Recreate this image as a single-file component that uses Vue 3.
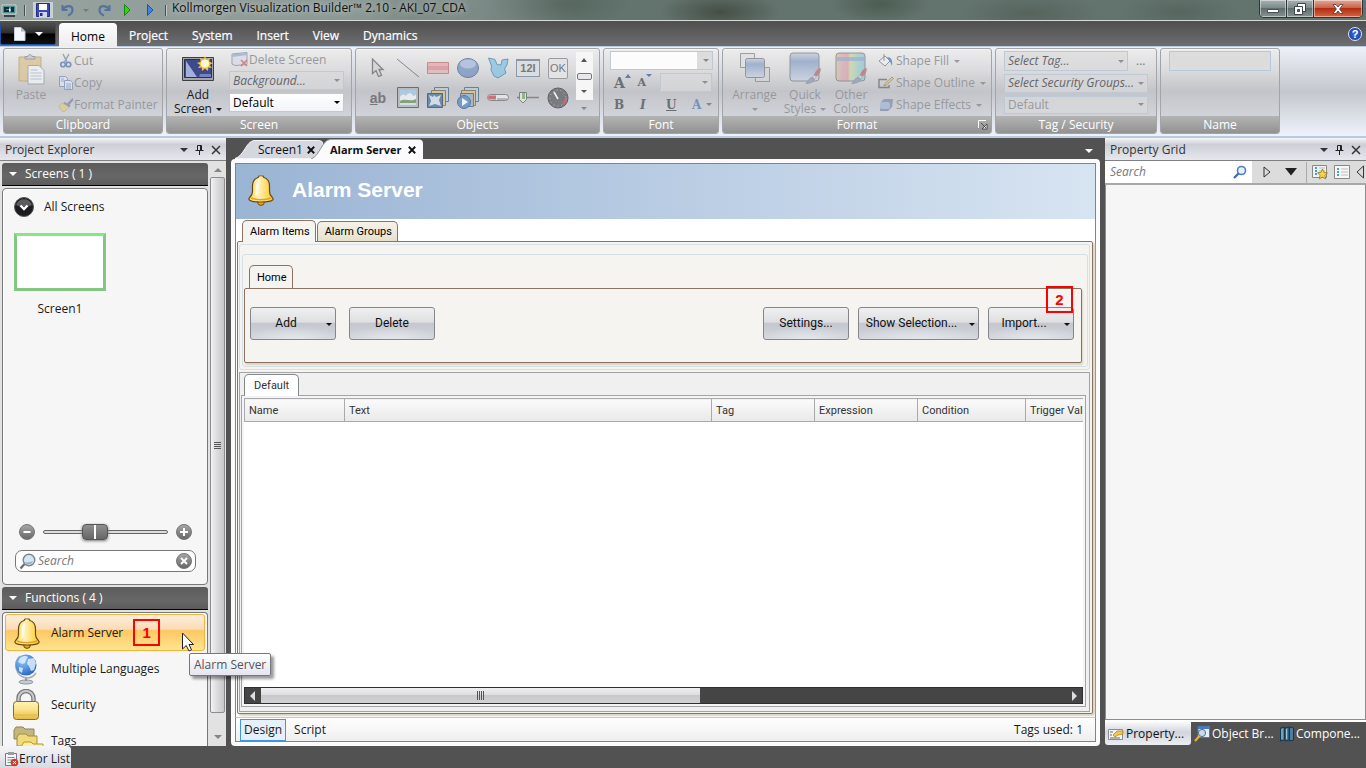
<script setup>
import { ref } from 'vue'

const ribbonTabs = ['Project', 'System', 'Insert', 'View', 'Dynamics']
const columns = [
  { name: 'Name', cls: 'c-name' },
  { name: 'Text', cls: 'c-text' },
  { name: 'Tag', cls: 'c-tag' },
  { name: 'Expression', cls: 'c-expr' },
  { name: 'Condition', cls: 'c-cond' },
  { name: 'Trigger Val', cls: 'c-trig' }
]
const zoom = ref(39)
</script>

<template>
  <div class="app">
    <svg class="defs" width="0" height="0" aria-hidden="true">
      <defs>
        <linearGradient id="gold" x1="0" y1="0" x2="1" y2="0">
          <stop offset="0" stop-color="#ffd54f" /><stop offset="0.4" stop-color="#fff2b8" /><stop offset="1" stop-color="#ffc928" />
        </linearGradient>
        <linearGradient id="lockg" x1="0" y1="0" x2="0" y2="1">
          <stop offset="0" stop-color="#fff3b4" /><stop offset="0.45" stop-color="#fbe28a" /><stop offset="1" stop-color="#e3b93f" />
        </linearGradient>
        <radialGradient id="globe" cx="0.35" cy="0.3" r="0.8">
          <stop offset="0" stop-color="#8cc8ff" /><stop offset="1" stop-color="#1d5fc0" />
        </radialGradient>
        <linearGradient id="shapeblue" x1="0" y1="0" x2="0" y2="1">
          <stop offset="0" stop-color="#c9d0da" /><stop offset="0.3" stop-color="#94a9c9" /><stop offset="1" stop-color="#ccd4e2" />
        </linearGradient>
        <linearGradient id="rainbow" x1="0" y1="0" x2="1" y2="0">
          <stop offset="0" stop-color="#d9c7ab" /><stop offset="0.2" stop-color="#d5b3b8" /><stop offset="0.4" stop-color="#d8a9b3" />
          <stop offset="0.5" stop-color="#cdd7a8" /><stop offset="0.75" stop-color="#a8d0c9" /><stop offset="1" stop-color="#9cc4de" />
        </linearGradient>
        <linearGradient id="ball" x1="0" y1="0" x2="0" y2="1">
          <stop offset="0" stop-color="#a8a8a8" /><stop offset="1" stop-color="#666" />
        </linearGradient>
        <symbol id="bell" viewBox="0 0 28 32">
          <circle cx="14" cy="28" r="3.4" fill="#e9a41c" stroke="#6b4a12" />
          <path d="M14 1.500c-1.600 0-2.600.800-2.900 2C7.400 4.600 5.500 7.800 5.500 12v5.500c0 2.600-1 4.200-2.600 5.700-.9.900-1.300 1.700-.8 2.400 1 1.500 6 2.400 11.900 2.400s10.900-.9 11.900-2.400c.5-.7.1-1.500-.8-2.400-1.600-1.500-2.600-3.100-2.600-5.700V12c0-4.200-1.900-7.400-5.600-8.500-.3-1.200-1.300-2-2.900-2z" fill="url(#gold)" stroke="#6b4a12" stroke-width="1.200" />
          <path d="M4 24c5 2.200 15 2.200 20 0" fill="none" stroke="#e2a41e" stroke-width="1.500" />
          <path d="M9 9c1-2 2-2.800 3.500-3.200L11 20l-3 2z" fill="#fff" opacity=".7" />
        </symbol>
        <symbol id="pin" viewBox="0 0 9 10">
          <path d="M2.500 .5h4v5h-4zM5.500 .5v5M.5 5.500h8M4.500 6v4" fill="none" stroke="#222" />
        </symbol>
        <symbol id="cross" viewBox="0 0 10 10">
          <path d="M1 1l8 8M9 1l-8 8" stroke="#333" stroke-width="1.500" fill="none" />
        </symbol>
        <symbol id="brush" viewBox="0 0 16 16">
          <path d="M15.500 0c.8 3-1 7-4.500 8.500L9 7c1-3.500 3.500-6.500 6.500-7z" fill="#b97a80" />
          <path d="M9 7l2.200 1.800-1.700 2-2-1.500z" fill="#d9dde4" stroke="#8a8e98" stroke-width=".5" />
          <path d="M7.500 9.300l2 1.700c-.5 3-3.500 4.500-9 4.500 2.500-1 2.500-5.500 7-6.200z" fill="#98a2b8" stroke="#7d879c" stroke-width=".5" />
        </symbol>
      </defs>
    </svg>

    <header class="titlebar">
      <div class="quick">
        <svg width="16" height="16" viewBox="0 0 16 16"><path d="M1 3h14v9H1z" fill="#4f9096" stroke="#cdd6d6" /><path d="M3 5h5v2H5v1h3v2H3zM10 5h3v5h-3z" fill="#0e3035" /><path d="M8 6l2 2-2 2z" fill="#fff" /><path d="M3 14h11" stroke="#3a4444" stroke-width="2" /></svg>
        <i class="sep"></i>
        <button aria-label="Save" class="q save"><svg width="14" height="14" viewBox="0 0 14 14"><path d="M.5 .5h13v13h-13z" fill="#3c49b5" stroke="#232c86" /><path d="M3 1h8v6H3z" fill="#fff" /><path d="M3 9h8v5H3z" fill="#cfd5ee" /><path d="M4 10h2.500v3H4z" fill="#232c86" /></svg></button>
        <button aria-label="Undo" class="q"><svg width="14" height="14" viewBox="0 0 14 14"><path d="M1.500 2v5h5" fill="none" stroke="#56729e" stroke-width="2" /><path d="M2 6.500C4.500 2 11.500 1.800 11.500 7c0 3-2 4.500-4.500 5.500" fill="none" stroke="#56729e" stroke-width="2.200" /></svg></button>
        <i class="caret dim"></i>
        <button aria-label="Redo" class="q"><svg width="14" height="14" viewBox="0 0 14 14"><path d="M12.500 2v5h-5" fill="none" stroke="#56729e" stroke-width="2" /><path d="M12 6.500C9.500 2 2.500 1.800 2.500 7c0 3 2 4.500 4.500 5.500" fill="none" stroke="#56729e" stroke-width="2.200" /></svg></button>
        <button aria-label="Run" class="q"><svg width="12" height="14" viewBox="0 0 12 14"><path d="M3.500 1.500l5.500 5.500-5.500 5.500z" fill="#35cf1c" stroke="#128a0b" /></svg></button>
        <button aria-label="Simulate" class="q"><svg width="12" height="14" viewBox="0 0 12 14"><path d="M3.500 1.500l5.500 5.500-5.500 5.500z" fill="#3f83dd" stroke="#1b53a5" /></svg></button>
        <i class="sep"></i>
      </div>
      <h1>Kollmorgen Visualization Builder™ 2.10 - AKI_07_CDA</h1>
      <div class="winbtns">
        <button aria-label="Minimize"><svg width="14" height="12" viewBox="0 0 14 12"><path d="M1.500 6.500h11v3h-11z" fill="#fff" stroke="#4a5157" /></svg></button>
        <button aria-label="Restore"><svg width="14" height="14" viewBox="0 0 14 14"><path d="M4.500 1.500h8v8h-8z" fill="#fff" stroke="#3d454b" /><path d="M1.500 4.500h8v8h-8z" fill="#fff" stroke="#3d454b" /><path d="M4.500 7.500h2v2h-2z" fill="#6c777a" stroke="#3d454b" /></svg></button>
        <button aria-label="Close" class="close"><svg width="12" height="12" viewBox="0 0 12 12"><path d="M1 1.500h3L6 4l2-2.500h3L7.600 6l3.400 4.500H8L6 8l-2 2.500H1L4.400 6z" fill="#fff" stroke="#53393a" stroke-width=".8" /></svg></button>
      </div>
    </header>

    <nav class="tabs">
      <button class="filebtn" aria-label="File menu">
        <svg width="12" height="14" viewBox="0 0 12 14"><path d="M.5 .5h6.500l4 4v9H.5z" fill="#f4f7fb" stroke="#c4ccd6" /><path d="M7 .5v4h4z" fill="#aeb9c8" /></svg>
        <i class="caret big white"></i>
      </button>
      <button class="rtab active">Home</button>
      <button v-for="t in ribbonTabs" :key="t" class="rtab">{{ t }}</button>
      <button class="help" aria-label="Help">?</button>
    </nav>

    <section class="ribbon">
      <div class="group g-clip">
        <div class="gbody">
          <button class="bigbtn off paste">
            <svg width="30" height="32" viewBox="0 0 30 32"><path d="M3 4h22v24H3z" fill="#dcc79c" stroke="#bfa878" /><path d="M9 6V3.500h3C12 1 16 1 16 3.500h3V6z" fill="#c9ccd0" stroke="#8d9196" /><path d="M12 12.500h11l5 5V31H12z" fill="#eef1f5" stroke="#9ba3ae" /><path d="M14.500 17h7M14.500 20h11M14.500 23h11M14.500 26h11" stroke="#b5bdc9" /></svg>
            <span>Paste</span>
          </button>
          <div class="stack">
            <button class="row off"><svg width="16" height="16" viewBox="0 0 16 16"><path d="M5 1l4 8M11 1L6.500 9" stroke="#8c97a8" stroke-width="1.500" /><circle cx="5" cy="11.500" r="2.300" fill="none" stroke="#6985b8" stroke-width="1.600" /><circle cx="10.500" cy="11.500" r="2.300" fill="none" stroke="#6985b8" stroke-width="1.600" /></svg>Cut</button>
            <button class="row off"><svg width="16" height="16" viewBox="0 0 16 16"><path d="M1.500 1.500h6l2 2v8h-8z" fill="#dde3ee" stroke="#8799bb" /><path d="M6.500 5.500h6l2 2v7h-8z" fill="#dde3ee" stroke="#8799bb" /><path d="M3 4h3M3 6h3M8 9h5M8 11h5M8 13h5" stroke="#8fa3c8" /></svg>Copy</button>
            <button class="row off"><svg width="16" height="16" viewBox="0 0 16 16"><path d="M14.500 1L9 6.500l2 2L15.500 3z" fill="#8a91b8" /><path d="M4 6l7 4-5 5c-2-1-4-3-5-6z" fill="#dccf94" stroke="#b3a76f" stroke-width=".6" /><path d="M6 5.500l6 4" stroke="#8f95a2" stroke-width="2" /></svg>Format Painter</button>
          </div>
        </div>
        <div class="cap">Clipboard</div>
      </div>

      <div class="group g-screen">
        <div class="gbody">
          <button class="bigbtn addscreen">
            <svg width="32" height="26" viewBox="0 0 32 26"><path d="M.5 1.500h31v23H.5z" fill="#a2a5aa" stroke="#3c3e42" /><path d="M2.500 3.500h27v18h-27z" fill="#40498c" stroke="#2a2f55" /><path d="M4 5l11 16H4z" fill="#a3b0dc" /><path d="M18 18h11v3H17z" fill="#7182c6" /><path d="M23 0l1.500 3.500L28 2l-.8 3.700L31 7l-3.400 2L30 12l-3.700-.5L26 15l-3-2.500L20 15l-.3-3.500L16 12l2.300-3L15 7l3.700-1.300L18 2l3.500 1.500z" fill="#f5c533" /><circle cx="23" cy="7.500" r="4" fill="#fffbd2" /></svg>
            <span>Add<br />Screen <i class="caret"></i></span>
          </button>
          <div class="stack">
            <button class="row off"><svg width="18" height="16" viewBox="0 0 18 16"><path d="M1 2l15-1.500v12L4 13.500 1 12z" fill="#d9dde4" stroke="#8e98ab" /><path d="M1.500 2.500L16 1v2L1.500 5z" fill="#9fb0d2" /><path d="M10 8l6 6M16 8l-6 6" stroke="#cf6f75" stroke-width="1.600" /></svg>Delete Screen</button>
            <label class="combo dis"><select aria-label="Background" disabled><option>Background...</option></select><i class="caret"></i></label>
            <label class="combo plain"><select aria-label="Screen style"><option>Default</option></select><i class="caret"></i></label>
          </div>
        </div>
        <div class="cap">Screen</div>
      </div>

      <div class="group g-obj">
        <div class="gbody">
          <div class="objgrid">
            <button aria-label="Select"><svg width="22" height="22" viewBox="0 0 22 22"><path d="M5.500 2v14.500l3.500-3 2.500 6 3-1.200-2.500-5.800H16z" fill="#d5d5d6" stroke="#66676a" stroke-width="1.300" /></svg></button>
            <button aria-label="Line"><svg width="22" height="22" viewBox="0 0 22 22"><path d="M0 2l22 18" stroke="#66696f" /></svg></button>
            <button aria-label="Rectangle"><svg width="22" height="22" viewBox="0 0 22 22"><path d="M.5 5.500h21v11H.5z" fill="#d98f95" stroke="#b87076" /><path d="M1 6h20v3H1z" fill="#e4a9ad" /><path d="M1 13h20v3H1z" fill="#e4b3b6" /></svg></button>
            <button aria-label="Ellipse"><svg width="22" height="22" viewBox="0 0 22 22"><ellipse cx="11" cy="11" rx="10.500" ry="9.500" fill="#7593c0" stroke="#4a6290" /><ellipse cx="11" cy="7" rx="8" ry="4.500" fill="#a7bbd8" /></svg></button>
            <button aria-label="Polygon"><svg width="22" height="22" viewBox="0 0 22 22"><path d="M1.500 1L8 2.500l2 5 4 .5 1-5 6-1-1 6-2.500 4 1.500 4-8 5-4-2-3-6 .5-4z" fill="#86c3e2" stroke="#4b83ab" /></svg></button>
            <button aria-label="Analog numeric" class="num"><span>12I</span></button>
            <button aria-label="Button" class="okb"><span>OK</span></button>
            <button aria-label="Text" class="abb"><span><u>a</u>b</span></button>
            <button aria-label="Picture"><svg width="22" height="22" viewBox="0 0 22 22"><path d="M.5 .5h21v20H.5z" fill="#b5b8ba" stroke="#4d4f51" /><path d="M3 3h16v15H3z" fill="#a4cdea" /><path d="M3 10c2-3 4-3 6-1 2-4 6-3 7 0l3-1v6H3z" fill="#f2f5f7" /><path d="M3 14c5-3 11 1 16-2v6H3z" fill="#6c9465" /><path d="M3 16h16v2H3z" fill="#dbe4e8" /></svg></button>
            <button aria-label="Symbol"><svg width="22" height="22" viewBox="0 0 22 22"><path d="M7.500 .5h14v14h-14z" fill="#bccddd" stroke="#4b6885" /><path d="M4.500 3.500h14v15h-14z" fill="#d8c48e" stroke="#7b6c48" /><path d="M.5 6.500h15v14H.5z" fill="#4c769e" stroke="#34465b" /><path d="M2 8l4 2 1-2 2 2 5-2-2 5 2 6-6-2-6 2 2-5z" fill="#d4e2ee" /></svg></button>
            <button aria-label="Animation"><svg width="22" height="22" viewBox="0 0 22 22"><path d="M7.500 .5h14v14h-14z" fill="#bccddd" stroke="#4b6885" /><path d="M4.500 3.500h14v15h-14z" fill="#d8c48e" stroke="#7b6c48" /><path d="M3.500 6.500h13v13h-13z" fill="#9fb3c6" stroke="#4d6176" /><circle cx="7" cy="15" r="6.500" fill="#5a8bc2" stroke="#38608d" /><path d="M5 11l6 4-6 4z" fill="#fff" /></svg></button>
            <button aria-label="Linear meter"><svg width="22" height="22" viewBox="0 0 22 22"><rect x=".5" y="7.500" width="21" height="6" rx="3" fill="#eeeef0" stroke="#707275" /><path d="M3 8.500h6v4H3a2 2 0 010-4z" fill="#d0555c" /><path d="M11 11v2M13 11v2M15 11v2M17 11v2M19 11v2" stroke="#777" /></svg></button>
            <button aria-label="Slider"><svg width="22" height="22" viewBox="0 0 22 22"><path d="M0 10.500h22" stroke="#707275" stroke-width="1.500" /><path d="M2.500 5.500h7v7L6 16l-3.500-3.500z" fill="#e8eae8" stroke="#66686b" /><path d="M5 6h3v6H5z" fill="#79b56f" /></svg></button>
            <button aria-label="Circular meter"><svg width="22" height="22" viewBox="0 0 22 22"><circle cx="11" cy="11" r="10" fill="#5f6164" stroke="#3f4143" /><circle cx="11" cy="11" r="8" fill="none" stroke="#b9babc" stroke-dasharray="1 3" /><path d="M11 12L7 5" stroke="#fff" stroke-width="1.600" /><path d="M19 12a8 8 0 01-3 5" stroke="#d0474d" stroke-width="2.500" fill="none" /></svg></button>
          </div>
          <div class="objside">
            <div class="objscroll"><i class="caret up"></i><b></b><i class="caret"></i></div>
            <i class="caret grey"></i>
          </div>
        </div>
        <div class="cap">Objects</div>
      </div>

      <div class="group g-font">
        <div class="gbody col">
          <label class="combo ffam"><input type="text" aria-label="Font family" /><i class="caret grey"></i></label>
          <div class="frow">
            <button class="ser s17" aria-label="Grow font">A<i class="caret up blue"></i></button>
            <button class="ser s14" aria-label="Shrink font">A<i class="caret blue"></i></button>
            <label class="combo dis fsize"><select aria-label="Font size" disabled><option></option></select><i class="caret"></i></label>
          </div>
          <div class="frow four">
            <button class="ser bold">B</button><button class="ser ital">I</button><button class="ser und">U</button><button class="ser colr">A<i class="caret grey"></i></button>
          </div>
        </div>
        <div class="cap">Font</div>
      </div>

      <div class="group g-format">
        <div class="gbody">
          <button class="bigbtn off w1"><svg width="32" height="32" viewBox="0 0 32 32"><path d="M1.500 1.500h14v14h-14z" fill="#dfe0e2" stroke="#8f9196" /><path d="M16.500 15.500h14v14h-14z" fill="#d4d5d8" stroke="#8f9196" /><rect x="6.500" y="6.500" width="19" height="19" rx="2" fill="url(#shapeblue)" stroke="#85888f" /></svg><span>Arrange<br /><i class="caret"></i></span></button>
          <button class="bigbtn off w2"><svg width="32" height="32" viewBox="0 0 32 32"><rect x="1" y="1" width="29" height="28" rx="3" fill="url(#shapeblue)" stroke="#85888f" /><use href="#brush" x="16" y="16" width="16" height="16" /></svg><span>Quick<br />Styles <i class="caret"></i></span></button>
          <button class="bigbtn off w3"><svg width="32" height="32" viewBox="0 0 32 32"><rect x="1" y="1" width="29" height="28" rx="3" fill="url(#rainbow)" stroke="#85888f" /><path d="M2 5h27v4H2z" fill="#8fa7cc" opacity=".7" /><use href="#brush" x="16" y="16" width="16" height="16" /></svg><span>Other<br />Colors</span></button>
          <div class="stack">
            <button class="row off"><svg width="16" height="14" viewBox="0 0 16 14"><path d="M1 7l6-5 5 5-5 5z" fill="#eceef1" stroke="#85888f" /><path d="M6 0v7" stroke="#85888f" /><path d="M9 3c4 0 6 3 5 9-1-3-2-5-5-9z" fill="#5d86c2" /></svg>Shape Fill <i class="caret"></i></button>
            <button class="row off"><svg width="16" height="14" viewBox="0 0 16 14"><path d="M9 3.500H1v8h10V9" fill="none" stroke="#77797c" stroke-width="1.400" /><path d="M14 1l1.500 1.500L8 9.500l-2 .5.500-2z" fill="#dcc98b" stroke="#8a7d58" stroke-width=".7" /></svg>Shape Outline <i class="caret"></i></button>
            <button class="row off"><svg width="16" height="14" viewBox="0 0 16 14"><path d="M3 4l3-3h9l-1 8-4 4H2z" fill="#8b96ac" /><rect x="2" y="4" width="10" height="7" rx="2" fill="#a9bbd9" /></svg>Shape Effects <i class="caret"></i></button>
          </div>
        </div>
        <div class="cap">Format<svg class="launch" width="10" height="10" viewBox="0 0 10 10"><path d="M.5 8V.5H8" stroke="#fff" fill="none" /><path d="M3 3l5 5M9 4v5H4z" stroke="#333" fill="#eee" stroke-width=".8" /></svg></div>
      </div>

      <div class="group g-tag">
        <div class="gbody col">
          <div class="tagrow"><label class="combo dis it"><select aria-label="Tag" disabled><option>Select Tag...</option></select><i class="caret"></i></label><button class="dots" aria-label="Browse tags">...</button></div>
          <label class="combo dis it"><select aria-label="Security groups" disabled><option>Select Security Groups...</option></select><i class="caret"></i></label>
          <label class="combo dis rom"><select aria-label="Visibility" disabled><option>Default</option></select><i class="caret"></i></label>
        </div>
        <div class="cap">Tag / Security</div>
      </div>

      <div class="group g-name">
        <div class="gbody col"><input class="nameinp" type="text" aria-label="Object name" disabled /></div>
        <div class="cap">Name</div>
      </div>
    </section>

    <main class="work">
      <aside class="left">
        <div class="phead"><h2>Project Explorer</h2><i class="caret big"></i><button aria-label="Pin panel"><svg width="9" height="10"><use href="#pin" /></svg></button><button aria-label="Close panel"><svg width="10" height="10"><use href="#cross" /></svg></button></div>
        <div class="lbody">
          <div class="lcol">
            <button class="bar"><i class="caret big white"></i>Screens ( 1 )</button>
            <div class="card screens">
              <div class="all"><svg width="20" height="20" viewBox="0 0 20 20"><circle cx="10" cy="10" r="9.500" fill="#1d1d1f" stroke="#555" /><path d="M2 8a8.500 8.500 0 0116 0c-4 2-12 2-16 0z" fill="#5b5b60" /><path d="M6.500 8.500L10 12l3.500-3.500" fill="none" stroke="#fff" stroke-width="2.400" /></svg>All Screens</div>
              <figure><div class="thumb"></div><figcaption>Screen1</figcaption></figure>
              <div class="zoomrow">
                <button aria-label="Zoom out"><svg width="16" height="16" viewBox="0 0 16 16"><circle cx="8" cy="8" r="7.500" fill="url(#ball)" stroke="#777" /><path d="M4.500 8h7" stroke="#fff" stroke-width="2" /></svg></button>
                <input type="range" min="0" max="100" v-model="zoom" aria-label="Thumbnail size" />
                <button aria-label="Zoom in"><svg width="16" height="16" viewBox="0 0 16 16"><circle cx="8" cy="8" r="7.500" fill="url(#ball)" stroke="#777" /><path d="M4 8h8M8 4v8" stroke="#fff" stroke-width="2" /></svg></button>
              </div>
              <div class="lsearch">
                <svg width="17" height="17" viewBox="0 0 17 17"><path d="M5.500 11L1.500 15.500" stroke="#6b6f74" stroke-width="2.400" /><circle cx="10" cy="7" r="5.800" fill="#d5e6f2" stroke="#7d858c" stroke-width="1.400" /><path d="M6 9c3 1 6 0 8-1-.5 3-6 5-8 1z" fill="#98adbd" /></svg>
                <input type="text" placeholder="Search" aria-label="Search screens" />
                <button aria-label="Clear"><svg width="16" height="16" viewBox="0 0 16 16"><circle cx="8" cy="8" r="7.500" fill="url(#ball)" stroke="#777" /><path d="M5 5l6 6M11 5l-6 6" stroke="#fff" stroke-width="2" /></svg></button>
              </div>
            </div>
            <button class="bar"><i class="caret big white"></i>Functions ( 4 )</button>
            <div class="card funcs">
              <button class="fn hot"><svg width="28" height="32"><use href="#bell" /></svg>Alarm Server<b class="mark">1</b></button>
              <button class="fn"><svg width="28" height="32" viewBox="0 0 28 32"><ellipse cx="13" cy="29" rx="7" ry="2" fill="#c8ccd0" stroke="#8f9599" /><path d="M13 24v4" stroke="#8f9599" stroke-width="2" /><path d="M7 3C-1 10 3 24 14 25c4 0 7-2 9-5" fill="none" stroke="#a8aeb3" stroke-width="1.600" /><circle cx="13" cy="12" r="10.500" fill="url(#globe)" /><path d="M7 5c4-3 7-2 8-1l-2 3-1 3-3 1-4-2zM15 6l6-1 2 5-2 7-3 1-2-5-2-2zM6 14l4 1-1 5-3-2z" fill="#e8f3fc" opacity=".8" /></svg>Multiple Languages</button>
              <button class="fn"><svg width="28" height="32" viewBox="0 0 28 32"><path d="M5.500 15V9.500a7.500 7.500 0 0115 0V15" fill="none" stroke="#77797a" stroke-width="4.500" /><path d="M5.500 15V9.500a7.500 7.500 0 0115 0V15" fill="none" stroke="#c9cbcc" stroke-width="2" /><rect x=".5" y="12.500" width="25" height="18" rx="3" fill="url(#lockg)" stroke="#8a6d27" /><path d="M2 26h22" stroke="#d1aa44" opacity=".6" /></svg>Security</button>
              <button class="fn"><svg class="wide" width="32" height="32" viewBox="0 0 32 32"><path d="M1 5l2-3h7l2 2h9v10H1z" fill="#c3b77f" stroke="#8b8460" /><path d="M4 12l2-3h7l2 2h9v10H4z" fill="#efdb7c" stroke="#a58e39" /><path d="M9 20l2-3h7l2 2h10v10H9z" fill="#fff0a0" stroke="#b89628" /></svg>Tags</button>
            </div>
          </div>
          <div class="vscroll"><i class="caret up big grey"></i><div class="vthumb"><span></span></div><i class="caret big grey end"></i></div>
        </div>
        <svg class="cursor" width="12" height="20" viewBox="0 0 12 20"><path d="M.5 1v16l3.700-3.500L7 19l2.500-1.200L7 12.500h4.500z" fill="#fff" stroke="#222" /></svg>
        <div class="tip" role="tooltip">Alarm Server</div>
      </aside>

      <section class="doc">
        <div class="dtabs">
          <button class="dtab t1"><svg class="shape" preserveAspectRatio="none" viewBox="0 0 94 20"><path d="M0 19.500C9 17 11 2.500 19 1.500H84q4 0 4 4V19.500z" fill="#d5d7df" stroke="#f2f3f6" /></svg><span>Screen1</span><svg class="x" width="8" height="8" viewBox="0 0 10 10"><path d="M1 1l8 8M9 1l-8 8" stroke="#111" stroke-width="2.400" /></svg></button>
          <button class="dtab t2"><svg class="shape" preserveAspectRatio="none" viewBox="0 0 112 20"><path d="M0 20C9 17 11 1 19 .5H108q4 0 4 4V20z" fill="#fbfbfd" /><path d="M0 20C9 17 11 1 19 .5" fill="none" stroke="#77787c" stroke-width=".8" /></svg><span>Alarm Server</span><svg class="x" width="8" height="8" viewBox="0 0 10 10"><path d="M1 1l8 8M9 1l-8 8" stroke="#111" stroke-width="2.400" /></svg></button>
          <i class="caret big white last"></i>
        </div>
        <div class="frame">
          <div class="banner"><svg width="28" height="32"><use href="#bell" /></svg><h2>Alarm Server</h2></div>
          <div class="page">
            <div class="btabs"><button class="bt on">Alarm Items</button><button class="bt alt">Alarm Groups</button></div>
            <div class="panel">
              <div class="tools">
                <div class="tools2">
                  <div class="btabs h"><button class="bt on home">Home</button></div>
                  <div class="actions">
                    <button class="act">Add<i class="caret"></i></button>
                    <button class="act">Delete</button>
                    <span class="grow"></span>
                    <button class="act">Settings...</button>
                    <button class="act wide">Show Selection...<i class="caret"></i></button>
                    <button class="act">Import...<i class="caret"></i></button>
                    <b class="mark m2">2</b>
                  </div>
                </div>
              </div>
              <div class="lists">
                <div class="btabs g"><button class="bt on gray">Default</button></div>
                <div class="grid">
                  <div class="tblwrap">
                    <table><thead><tr><th v-for="c in columns" :key="c.name" :class="c.cls">{{ c.name }}</th></tr></thead></table>
                  </div>
                  <div class="hscroll"><i class="arr l"></i><div class="hthumb"><span></span></div><i class="arr r"></i></div>
                </div>
              </div>
            </div>
          </div>
          <footer class="dfoot"><button class="on">Design</button><button>Script</button><span>Tags used: 1</span></footer>
        </div>
      </section>

      <aside class="right">
        <div class="phead"><h2>Property Grid</h2><i class="caret big"></i><button aria-label="Pin panel"><svg width="9" height="10"><use href="#pin" /></svg></button><button aria-label="Close panel"><svg width="10" height="10"><use href="#cross" /></svg></button></div>
        <div class="rtools">
          <div class="rsearch"><input type="text" placeholder="Search" aria-label="Search properties" /><svg width="14" height="14" viewBox="0 0 14 14"><circle cx="8.500" cy="5.500" r="4" fill="#e8f0fa" stroke="#4a7fc6" stroke-width="1.600" /><path d="M5.500 8.500L1 13" stroke="#3d6eb4" stroke-width="2.400" /></svg></div>
          <button aria-label="Next" class="nx"><svg width="8" height="12" viewBox="0 0 8 12"><path d="M1 1l6 5-6 5z" fill="none" stroke="#333" /></svg></button>
          <button aria-label="Options" class="dn"><svg width="12" height="8" viewBox="0 0 12 8"><path d="M0 0h12L6 7.500z" fill="#222" /></svg></button>
          <i class="vs"></i>
          <button aria-label="Favourites"><svg width="16" height="16" viewBox="0 0 16 16"><path d="M.5 1.500h14v12H.5z" fill="#f2f2f2" stroke="#888" /><path d="M3 4h2M3 7h2M3 10h2" stroke="#3aa0e0" stroke-width="2" /><path d="M7 4h6M7 7h6" stroke="#bbb" /><path d="M10.500 5l1.600 3.300 3.400.5-2.500 2.500.6 3.500-3.100-1.600-3.100 1.600.6-3.500L5.500 8.800l3.400-.5z" fill="#f8d24a" stroke="#927418" stroke-width=".8" /></svg></button>
          <button aria-label="List"><svg width="16" height="16" viewBox="0 0 16 16"><path d="M.5 1.500h15v13H.5z" fill="#f7f7f7" stroke="#888" /><path d="M3 5h2M3 8h2M3 11h2" stroke="#3aa0e0" stroke-width="2" /><path d="M7 5h7M7 8h7M7 11h7" stroke="#bbb" /></svg></button>
          <button aria-label="Back"><svg width="8" height="14" viewBox="0 0 8 14"><path d="M7.500 1L1 7l6.500 6z" fill="none" stroke="#333" /></svg></button>
        </div>
        <div class="rbody"></div>
        <div class="rtabs">
          <button class="on"><svg width="16" height="14" viewBox="0 0 16 14"><path d="M.5 2.500h14v10H.5z" fill="#f3f4f6" stroke="#8a8c90" /><path d="M2 5h3M2 8h2M2 11h10" stroke="#666" /><path d="M5 8l4-4h6v3l-5 1-3 2z" fill="#f4c945" stroke="#a6791a" stroke-width=".7" /></svg>Property...</button>
          <button><svg width="16" height="16" viewBox="0 0 16 16"><path d="M4 .5h11.500v11H4z" fill="#e6f0fb" stroke="#4a79bd" /><path d="M4 1h11v2H4z" fill="#4a79bd" /><circle cx="8" cy="7" r="3.600" fill="#c7dcf2" stroke="#5a6c80" /><path d="M5.500 10L1 15" stroke="#e2b23a" stroke-width="2.200" /></svg>Object Br...</button>
          <button><svg width="14" height="16" viewBox="0 0 14 16"><path d="M.5 2l4-1v13l-4 1zM5 2l4-1v13l-4 1zM9.500 1l4 1v12l-4 1z" fill="#4d7c9c" stroke="#16364c" /><path d="M2 3v10M6.500 3v10" stroke="#9cc4dc" /></svg>Compone...</button>
        </div>
      </aside>
    </main>

    <footer class="status"><button><svg width="15" height="16" viewBox="0 0 15 16"><path d="M1.500 2.500h11v12h-11z" fill="#f5f6f8" stroke="#777a80" /><path d="M4 1h6v3H4z" fill="#999ca2" /><path d="M3.500 6.500h7M3.500 9h5M3.500 11.500h4" stroke="#888" /><circle cx="10.500" cy="11.500" r="3.800" fill="#d8392c" /><path d="M9 10l3 3M12 10l-3 3" stroke="#fff" /></svg>Error List</button></footer>
  </div>
</template>

<style>
html, body { margin: 0; }
body { background: #525252; }
</style>

<style scoped>
* { box-sizing: border-box; }
.app { min-height: 100vh; display: flex; flex-direction: column; background: #525252; color: #1a1a1a; font: 12px/16px "Open Sans", "Noto Sans", sans-serif; overflow: hidden; }
.defs { position: absolute; }
button, input, select { font: inherit; color: inherit; background: none; border: 0; padding: 0; margin: 0; border-radius: 0; outline: 0; }
button { display: inline-flex; align-items: center; white-space: nowrap; }
h1, h2, figure { margin: 0; font-weight: 400; font-size: inherit; }
svg { flex: none; display: block; }

.caret { display: inline-block; flex: none; width: 0; height: 0; border: 3px solid transparent; border-top-color: currentColor; border-bottom: 0; }
.caret.big { border-width: 4px; border-bottom: 0; }
.caret.up { border-top: 0; border-bottom: 4px solid currentColor; }
.caret.white { color: #fff; }
.caret.grey { color: #85868a; }
.caret.blue { color: #5d7fb8; }
.caret.dim { color: #6f7d7c; }

.titlebar { height: 21px; display: flex; align-items: center; border-bottom: 1px solid #d7dcda; background: linear-gradient(90deg, rgba(215, 222, 220, .45), rgba(190, 200, 198, .4) 32%, transparent 42%), radial-gradient(60px 20px at 420px 12px, #4b5b50, transparent), radial-gradient(70px 22px at 560px 4px, #55665e, transparent), radial-gradient(60px 20px at 720px 12px, #454f44, transparent), radial-gradient(50px 20px at 880px 4px, #4c5e52, transparent), radial-gradient(70px 20px at 1030px 14px, #56645c, transparent), radial-gradient(60px 18px at 1180px 12px, #56665f, transparent), #63736e; }
.quick { width: 172px; display: flex; align-items: center; padding-left: 1px; gap: 7px; }
.q { width: 16px; justify-content: center; }
.save { width: 20px; background: rgba(255, 255, 255, .5); padding: 1px 0; }
.sep { width: 2px; height: 11px; border-left: 1px solid #47504e; border-right: 1px solid #c0c9c7; }
.titlebar h1 { flex: 1; color: #111; line-height: 16px; padding-bottom: 5px; text-shadow: 0 0 6px #dfe5e3; }
.winbtns { display: flex; align-self: flex-start; margin-right: 3px; border: 1px solid #2d3535; border-top: 0; border-radius: 0 0 5px 5px; overflow: hidden; }
.winbtns button { width: 27px; height: 17px; justify-content: center; background: linear-gradient(#a9b2b2, #7d8a8a 45%, #5f6d6d 50%, #86928f); border-right: 1px solid #2d3535; box-shadow: inset 0 0 0 1px rgba(255, 255, 255, .45); }
.winbtns .close { width: 48px; border-right: 0; background: linear-gradient(#e3a99b, #c96349 45%, #b02e12 50%, #d8643f); }

.tabs { height: 26px; display: flex; align-items: flex-end; background: linear-gradient(#4f4f4f, #6d6e70); color: #fff; position: relative; border-bottom: 1px solid #bccbdd; }
.filebtn { width: 56px; height: 22px; margin: 0 3px 1px 0; justify-content: center; gap: 9px; border: 1px solid #1c4fa8; border-radius: 2px; background: linear-gradient(#4d4d4d, #2c2c2c 45%, #000 50%, #111); }
.rtab { height: 24px; padding: 4px 12px 0; -webkit-text-stroke: .2px #fff; }
.rtab.active { color: #000; background: linear-gradient(#fdfdfd, #ebecee); border-radius: 4px 4px 0 0; margin-bottom: -1px; -webkit-text-stroke: 0; }
.help { position: absolute; right: 4px; top: 6px; width: 14px; height: 14px; border-radius: 50%; border: 1px solid #dfe5f2; background: radial-gradient(#3e6fe0, #12309a); font: bold 11px/12px "Liberation Sans", sans-serif; justify-content: center; }

.ribbon { display: flex; gap: 3px; padding: 1px 3px 2px; height: 91px; background: linear-gradient(#eef2f8, #c4c7cd 50%, #eef2fb); border-bottom: 2px solid #b9cbe0; }
.group { flex: none; display: flex; flex-direction: column; border: 1px solid #a3a4a7; border-radius: 3px; overflow: hidden; background: linear-gradient(#ececec, #dcdcde 25%, #c3c4c9 50%, #d8dbe3 95%); box-shadow: inset 0 1px 0 #f6f6f6; }
.gbody { flex: 1; display: flex; min-height: 0; }
.gbody.col { flex-direction: column; }
.cap { flex: none; height: 17px; line-height: 18px; color: #fff; text-align: center; background: linear-gradient(#b3b3b3, #929292); position: relative; }
.g-clip { width: 160px; } .g-screen { width: 186px; } .g-obj { width: 245px; } .g-font { width: 116px; } .g-format { width: 270px; } .g-tag { width: 162px; } .g-name { width: 120px; }
.bigbtn { flex-direction: column; line-height: 14px; text-align: center; }
.bigbtn .caret { margin: 0 0 2px 1px; }
.off { color: #97989c; }
.off svg { opacity: .85; }
.paste { width: 54px; padding-top: 4px; gap: 3px; }
.stack { display: flex; flex-direction: column; }
.row { gap: 2px; height: 22px; }
.row .caret { margin-left: 3px; }
.g-clip .stack, .g-format .stack { padding-top: 1px; }
.g-clip .row, .g-screen .row { gap: 0; }
.addscreen { width: 62px; padding-top: 7px; gap: 6px; }
.g-screen .row { margin-left: 2px; }
.combo { display: flex; align-items: center; position: relative; height: 19px; border: 1px solid #bfc9d5; background: #dcdcdd; }
.combo select, .combo input { appearance: none; width: 100%; height: 100%; padding: 0 12px 0 3px; opacity: 1; }
.combo .caret { position: absolute; right: 3px; pointer-events: none; }
.combo.dis { background: rgba(218, 218, 220, .7); font-style: italic; color: #63646a; }
.combo.dis .caret { color: #8f9095; }
.combo.rom { font-style: normal; color: #97989c; }
.g-screen .combo { width: 115px; margin-bottom: 3px; }
.combo.plain { background: linear-gradient(#fff, #f2f4f8); border-color: #b4cbe5; color: #000; }

.objgrid { display: grid; grid-template-columns: repeat(7, 30px); grid-auto-rows: 30px; padding: 4px 0 0 7px; width: 219px; }
.objgrid button { justify-content: center; }
.objgrid svg { opacity: .75; }
.objgrid span { font: bold 11px/15px "Liberation Sans", sans-serif; color: #77787c; }
.num span { border: 1px solid #8b98ac; border-width: 2px 1px 1px; padding: 0 3px; background: #dcdddf; }
.okb span { border: 1px solid #9b9c9f; border-radius: 2px; padding: 2px 1px; background: #e3e3e4; font-weight: 400; }
.objgrid .abb span { font-size: 14px; }
.objside { display: flex; flex-direction: column; align-items: center; gap: 7px; padding-top: 3px; width: 18px; }
.objscroll { width: 17px; height: 48px; background: #f6f6f7; color: #555; display: flex; flex-direction: column; align-items: center; justify-content: space-between; padding: 6px 0 7px; }
.objscroll b { width: 15px; height: 7px; border: 1px solid #77797c; border-radius: 2px; background: #e7e7e9; }

.g-font .gbody { padding: 2px 6px; gap: 3px; }
.ffam input { background: #fcfcfc; width: 86px; height: 17px; padding: 0; }
.combo.ffam { width: 103px; }
.frow { display: flex; align-items: center; height: 20px; }
.ser { font: bold 14px/18px "DejaVu Serif", serif; color: #6d6e73; width: 24px; padding-left: 4px; }
.ser.s14 { font-size: 11px; width: 27px; }
.s17 .caret, .s14 .caret { align-self: flex-start; }
.fsize { width: 54px; margin-left: auto; }
.four { justify-content: space-between; }
.four .ser { font-size: 12px; }
.ital { font-style: italic; } .und { text-decoration: underline; } .four .colr { color: #7890bd; gap: 5px; }

.w1, .w2, .w3 { padding-top: 3px; gap: 4px; }
.w1 { width: 63px; } .w2 { width: 38px; } .w3 { width: 54px; }
.launch { position: absolute; right: 3px; bottom: 3px; }
.g-tag .gbody { padding: 2px 8px; gap: 3px; }
.tagrow { display: flex; gap: 8px; }
.tagrow .combo { width: 124px; }
.g-tag .combo { height: 20px; }
.dots { color: #77787c; line-height: 12px; }
.nameinp { margin: 2px 8px; height: 20px; border: 1px solid #b4c8de; background: #dcdcdd; }

.work { flex: 1; display: flex; min-height: 0; }
.left { width: 226px; flex: none; display: flex; flex-direction: column; position: relative; background: #e2e2e3; }
.phead { height: 23px; display: flex; align-items: center; gap: 7px; padding: 1px 5px 0; background: linear-gradient(#f5f6f7, #ccd0d6 30%, #e6e8ee); border-bottom: 1px solid #7e8084; color: #333; flex: none; }
.phead h2 { flex: 1; }
.lbody { flex: 1; display: flex; min-height: 0; }
.lcol { flex: 1; padding: 2px 0 0 2px; display: flex; flex-direction: column; overflow: hidden; }
.bar { flex: none; height: 23px; background: linear-gradient(#5b5b5b, #676767 60%, #5c5c5c); border-radius: 3px 3px 0 0; border-bottom: 1px solid #000; color: #fff; gap: 8px; padding-left: 7px; width: 206px; }
.card { background: #f6f6f6; border: 1px solid #77787a; border-radius: 4px; margin-top: 2px; width: 206px; box-shadow: inset 1px 1px 0 #fff; }
.screens { height: 397px; flex: none; margin-bottom: 2px; padding: 8px 10px 8px 11px; display: flex; flex-direction: column; }
.all { display: flex; align-items: center; gap: 10px; }
.screens figure { margin: 16px 0 0; width: 92px; text-align: center; }
.thumb { height: 58px; border: 3px solid #82c882; border-top-color: #84e884; background: #fff; margin-bottom: 10px; }
.zoomrow { display: flex; align-items: center; gap: 8px; margin: auto 0 8px 5px; width: 173px; }
.zoomrow input { appearance: none; flex: 1; min-width: 0; height: 20px; }
.zoomrow input::-webkit-slider-runnable-track { height: 4px; border: 1px solid #666; border-radius: 2px; background: #ddd; }
.zoomrow input::-webkit-slider-thumb { appearance: none; width: 26px; height: 16px; margin-top: -7px; border: 1px solid #555; border-radius: 4px; background: linear-gradient(90deg, transparent 11px, #fff 11px, #fff 13px, transparent 13px), linear-gradient(#8f8f8f, #666); box-shadow: 0 1px 3px #777; }
.lsearch { display: flex; align-items: center; height: 22px; border: 1px solid #777; border-radius: 7px; background: #fff; padding: 0 3px; margin: 0 0 4px 1px; width: 181px; }
.lsearch input { flex: 1; min-width: 0; font-style: italic; padding-left: 2px; }
input::placeholder { color: #77787a; opacity: 1; }
.funcs { flex: 1 0 134px; height: 134px; padding: 1px 2px; overflow: hidden; border-bottom: 0; border-radius: 4px 4px 0 0; }
.fn { display: flex; width: 100%; height: 36px; padding-left: 8px; gap: 10px; }
.fn .wide { margin-right: -4px; }
.fn.hot { border: 1px solid #f3b43b; border-radius: 3px; height: 37px; background: linear-gradient(#fdeedd, #fbdcb5 40%, #fdc862 45%, #ffe48f); padding-left: 7px; }
.mark { display: grid; place-items: center; width: 27px; height: 27px; border: 2px solid #f00; color: #f00; font: bold 15px/20px "Liberation Sans", sans-serif; }
.vscroll { width: 17px; display: flex; flex-direction: column; align-items: center; padding: 7px 0; gap: 5px; }
.vthumb { flex: 1; width: 15px; border: 1px solid #8b8c8f; border-radius: 2px; background: linear-gradient(90deg, #f2f2f2, #dcdcde 45%, #c8c8cb); display: grid; place-items: center; }
.vthumb span { width: 7px; height: 7px; background: repeating-linear-gradient(#55565a 0 1px, transparent 1px 2px); }
.end { margin-top: 17px; }
.cursor { position: absolute; left: 182px; top: 494px; z-index: 4; }
.tip { position: absolute; left: 189px; top: 515px; z-index: 3; height: 23px; line-height: 21px; padding: 0 4px; color: #555; background: linear-gradient(#fff, #e4e5f0); border: 1px solid #76777a; border-radius: 2px; box-shadow: 3px 3px 3px rgba(0, 0, 0, .4); white-space: nowrap; }

.doc { flex: 1; min-width: 0; margin: 0 5px; display: flex; flex-direction: column; }
.dtabs { height: 21px; display: flex; align-items: flex-end; flex: none; padding-left: 4px; }
.dtab { position: relative; height: 20px; gap: 6px; padding-top: 1px; color: #111; }
.shape { position: absolute; inset: 0; width: 100%; height: 100%; }
.dtab span, .dtab .x { position: relative; }
.t1 { width: 94px; padding-left: 23px; gap: 4px; }
.t2 { width: 112px; margin-left: -18px; padding-left: 19px; font-weight: 700; font-size: 11px; }
.dtabs .last { margin: 0 7px 6px auto; }
.frame { flex: 1; display: flex; flex-direction: column; border: 4px solid #fbfbfd; border-radius: 4px; background: #fff; min-height: 0; }
.banner { flex: none; height: 56px; border: 1px solid #808387; border-bottom: 0; background: linear-gradient(90deg, #9ab4d4, #d7e4f2); display: flex; align-items: center; gap: 17px; padding: 0 0 3px 11px; }
.banner h2 { color: #fff; font: bold 21px/28px "Liberation Sans Narrow", "Liberation Sans", sans-serif; }
.page { font-family: Roboto, "Open Sans", sans-serif; flex: 1; display: flex; flex-direction: column; min-height: 0; border: solid #808387; border-width: 0 1px; padding: 1px 2px 3px 1px; }
.btabs { display: flex; align-items: flex-end; gap: 1px; padding-left: 5px; margin-bottom: -1px; position: relative; flex: none; }
.bt { border: 1px solid #8c7263; border-bottom: 0; border-radius: 5px 5px 0 0; height: 22px; padding: 0 5px 0 7px; background: #f6f4f0; color: #000; font-size: 11px; }
.bt.alt { background: linear-gradient(#f5f2e8, #e6e0cd); height: 20px; margin-bottom: 1px; }
.panel { flex: 1; border: 1px solid #8c7263; border-radius: 2px; background: #f6f4f0; padding: 2px 2px 1px 1px; display: flex; flex-direction: column; min-height: 0; box-shadow: 2px 2px 2px #d9d3bf; }
.tools { border: 1px solid #d5dfe7; border-radius: 3px; padding: 9px 1px 2px 2px; flex: none; margin-bottom: 2px; }
.tools2 { border: 1px solid #d5dfe7; border-radius: 3px; padding: 10px 5px 3px 1px; }
.h .home { height: 24px; padding-top: 1px; }
.actions { height: 75px; border: 1px solid #8c7263; border-radius: 2px; display: flex; align-items: center; padding: 0 7px 5px 5px; position: relative; box-shadow: 1px 2px 2px #d9d3bf; }
.actions .grow { flex: 1; }
.act { width: 86px; height: 33px; justify-content: center; border: 1px solid #85868a; border-radius: 3px; background: radial-gradient(60% 40% at 50% 100%, #e4e7ec, transparent), linear-gradient(#f0f0f1, #dedfe2 45%, #c4c7ce 50%, #d2d5db); font-size: 12px; color: #111; position: relative; margin-right: 9px; }
.act:first-child { margin-right: 13px; }
.act:nth-last-child(2) { margin-right: 0; }
.act .caret { position: absolute; right: 3px; top: 15px; }
.act:has(.caret) { padding-right: 14px; }
.act.wide { width: 121px; }
.m2 { position: absolute; right: 8px; top: -3px; }
.lists { flex: 1; display: flex; flex-direction: column; border: 1px solid #a2a3a5; background: #f0f0f0; padding: 1px 3px 4px 1px; min-height: 0; }
.g { padding-left: 3px; }
.bt.gray { border-color: #85868a; background: #fff; padding: 0 9px; color: #333; }
.grid { flex: 1; display: flex; flex-direction: column; border: 1px solid #a2a3a5; background: #f4f4f6; padding: 2px 2px 2px; min-height: 0; }
.tblwrap { flex: 1; background: #fff; overflow: hidden; min-height: 0; }
table { border-collapse: collapse; table-layout: fixed; width: 100%; font-size: 11px; }
th { height: 23px; font-weight: 400; text-align: left; padding: 1px 0 0 4px; border: 1px solid #a9aaac; background: linear-gradient(#fafafa, #e9e9e9); color: #333; white-space: nowrap; overflow: hidden; }
th:last-child { border-right: 0; }
.c-name { width: 100px; } .c-text { width: 367px; } .c-tag { width: 103px; } .c-expr { width: 103px; } .c-cond { width: 108px; }
.hscroll { height: 17px; background: #454545; border: 1px solid #2e2e32; display: flex; align-items: center; flex: none; }
.arr { border: 5px solid transparent; width: 0; height: 0; }
.arr.l { border-right-color: #ddd; border-left: 0; margin: 0 6px 0 5px; }
.arr.r { border-left-color: #ddd; border-right: 0; margin: 0 5px 0 auto; }
.hthumb { width: 52.5%; height: 15px; background: linear-gradient(#efeff0, #dedee0 45%, #c8c8ca 50%, #d2d2d4); display: grid; place-items: center; }
.hthumb span { width: 7px; height: 9px; background: repeating-linear-gradient(90deg, #55565a 0 1px, transparent 1px 2px); }
.dfoot { flex: none; height: 25px; display: flex; align-items: center; padding: 1px 12px 0 4px; border: 1px solid #808387; border-top-color: #c9c9c9; background: linear-gradient(#fff, #eee); }
.dfoot button { height: 22px; padding: 0 4px; margin-right: 3px; border: 1px solid transparent; }
.dfoot .on { border-color: #3d96ee; background: #e6f0fb; padding: 0 3px; }
.dfoot span { margin-left: auto; }

.right { width: 261px; flex: none; display: flex; flex-direction: column; background: #f6f6f6; }
.rtools { height: 24px; flex: none; display: flex; align-items: center; gap: 4px; background: #dcdcdc; border-bottom: 2px solid #a8a8a8; overflow: hidden; }
.rsearch { width: 147px; height: 22px; background: #fff; display: flex; align-items: center; padding: 0 5px; flex: none; margin-right: 5px; }
.rsearch input { flex: 1; min-width: 0; font-style: italic; }
.rtools > button { padding: 0 1px; }
.rtools > .nx { padding: 0 2px; }
.rtools > .dn { margin: 0 3px 0 6px; padding: 0 2px; }
.vs { width: 1px; height: 21px; background: #aaa; }
.rbody { flex: 1; border: 1px solid #8d8d8d; border-width: 0 1px 1px; }
.rtabs { display: flex; height: 26px; flex: none; background: #525252; color: #fff; border-top: 2px solid #fff; }
.rtabs button { width: 86px; height: 23px; gap: 2px; padding-left: 3px; }
.rtabs .on { background: linear-gradient(#fafafb, #d2d5dd 45%, #eceef3); color: #111; border-radius: 0 0 3px 3px; }
.status { height: 22px; flex: none; }
.status button { height: 22px; width: 71px; padding: 3px 0 0 4px; background: linear-gradient(#f5f5f7, #d8dae0); border-radius: 0 4px 0 0; gap: 0; }
</style>
